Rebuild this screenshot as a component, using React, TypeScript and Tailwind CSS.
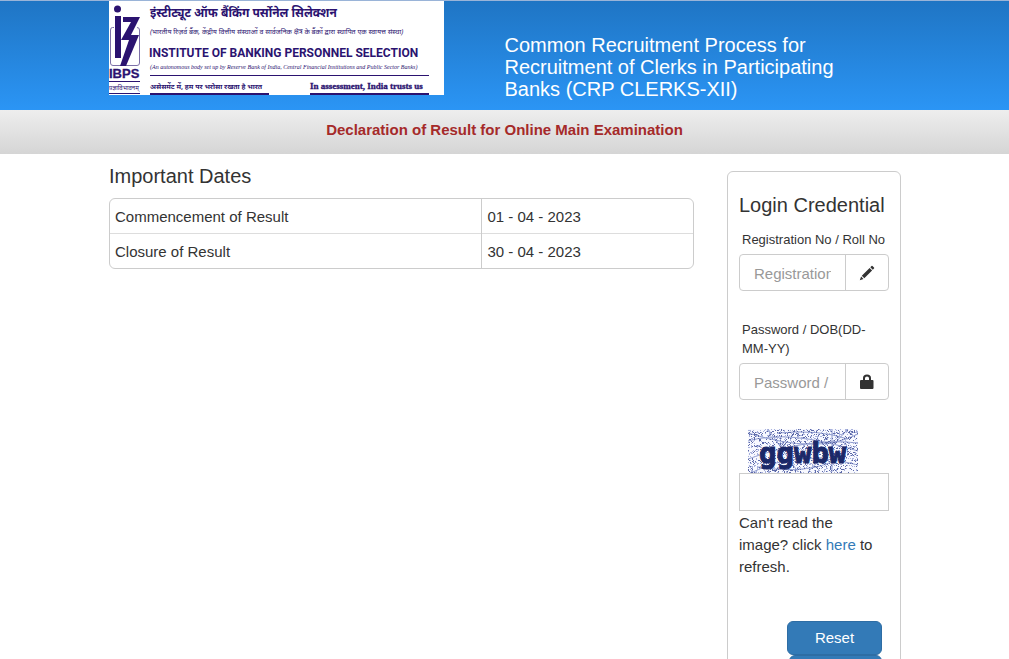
const DATES = [
  { label: "Commencement of Result", date: "01 - 04 - 2023" },
  { label: "Closure of Result", date: "30 - 04 - 2023" },
];

// small fixed-seed generator, so the captcha speckle is the same on each render
function speckle(start: number, count: number, width: number, height: number) {
  let seed = start;
  const next = () => {
    seed = (seed * 16807) % 2147483647;
    return seed / 2147483647;
  };
  let d = "";
  for (let i = 0; i < count; i++) {
    d += `M${Math.floor(next() * width)} ${Math.floor(next() * height)}h1v1h-1z`;
  }
  return d;
}

const SPECKLE_DARK = speckle(4711, 750, 110, 44);
const SPECKLE_LIGHT = speckle(90210, 1100, 110, 44);

function Logo() {
  return (
    <svg viewBox="0 0 335 94" className="block h-[94px] w-[335px] bg-white" role="img" aria-label="IBPS" fill="#2b1370">
      <path d="M5 26.500H3.500Q1.500 26.500 1.500 29V62Q1.500 64.500 4 64.500H28Q30.500 64.500 30.500 62V29Q30.500 26.500 28 26.500" fill="none" stroke="#7d70a8" />
      <ellipse cx="8.500" cy="8" rx="3.500" ry="3.500" />
      <path d="M6 15h6v42H6zM14 16h17l-9 18h8L17 65h-6l9-26h-8l10-18h-8z" />
      <text x="0" y="77" fontFamily="Liberation Sans, sans-serif" fontSize="13" fontWeight="700" stroke="#2b1370" strokeWidth="0.3">IBPS</text>
      <path d="M0 80h31v1H0zM0 92h31v1H0zM41 74h279v1H41zM41 92h119v2H41zM201 92h119v2H201z" />
      <text x="0" y="89" fontFamily="Noto Sans, sans-serif" fontSize="6">प्रज्ञाविभावनम्</text>
      <text x="41" y="16" fontFamily="Noto Sans, sans-serif" fontSize="12" fontWeight="700">इंस्टीट्यूट ऑफ बैंकिंग पर्सोनेल सिलेक्शन</text>
      <text x="41" y="33" fontFamily="Noto Sans, sans-serif" fontSize="7" fontStyle="italic">(भारतीय रिज़र्व बैंक, केंद्रीय वित्तीय संस्थाओं व सार्वजनिक क्षेत्र के बैंकों द्वारा स्थापित एक स्वायत्त संस्था)</text>
      <text x="40" y="56" fontFamily="Roboto, sans-serif" fontSize="12" fontWeight="700">INSTITUTE OF BANKING PERSONNEL SELECTION</text>
      <text x="41" y="68" fontFamily="Liberation Serif, serif" fontSize="6" fontStyle="italic">(An autonomous body set up by Reserve Bank of India, Central Financial Institutions and Public Sector Banks)</text>
      <text x="41" y="88" fontFamily="Noto Sans, sans-serif" fontSize="7" fontWeight="700">असेसमेंट में, हम पर भरोसा रखता है भारत</text>
      <text x="201" y="88" fontFamily="Liberation Serif, serif" fontSize="9" fontWeight="700" stroke="#2b1370" strokeWidth="0.3">In assessment, India trusts us</text>
    </svg>
  );
}

function PencilIcon() {
  return (
    <svg viewBox="0 0 16 16" className="size-4" fill="#333333" aria-hidden="true">
      <path d="M12.500 1q0.500-0.500 1 0L15 2.500q0.500 0.500 0 1L13.800 4.700l-2.500-2.500zM10.600 2.900l2.500 2.500-7.800 7.800-2.500-2.500zM2.100 11.500l2.400 2.400L0.800 15.200z" />
    </svg>
  );
}

function LockIcon() {
  return (
    <svg viewBox="0 0 16 16" className="size-4" fill="#333333" aria-hidden="true">
      <path fillRule="evenodd" d="M4 6V4Q4 0.500 8 0.500T12 4V6H13.500q1 0 1 1v7q0 1-1 1H2q-1 0-1-1V7q0-1 1-1zM6 6h4V4.200Q10 2.500 8 2.500T6 4.200z" />
    </svg>
  );
}

function Captcha() {
  return (
    <svg viewBox="0 0 110 44" className="ml-[9px] block h-11 w-[110px]" role="img" aria-label="Captcha">
      <rect width="110" height="44" fill="#f8f9ff" />
      <g fill="none" stroke="#8d9ace">
        <path d="M0 12Q40 0 110 22M0 30Q60 8 110 14M5 43Q50 20 110 36M0 4Q70 26 110 5M84 0v43M20 0L50 43M60 43L100 0M30 4Q70 0 100 10M10 38Q60 46 90 30" />
      </g>
      <path d={SPECKLE_LIGHT} fill="#a9b2dc" />
      <path d={SPECKLE_DARK} fill="#5c69a8" />
      <text x="11" y="34" fontFamily="DejaVu Sans Mono, monospace" fontSize="29" fontWeight="700" fill="#1b2868" stroke="#1b2868" strokeWidth="1">
        ggwbw
      </text>
    </svg>
  );
}

export default function App() {
  return (
    <div className="min-h-screen bg-white font-['Liberation_Sans',sans-serif] text-[15px] text-[#333333]">
      <header className="grid h-[110px] grid-cols-2 border-t border-[#9ab4d8] bg-linear-to-b from-[#1f75c4] to-[#2b95f5] px-[109px]">
        <div>
          <Logo />
        </div>
        <h1 className="pt-[33px] pr-12 text-[20px] leading-[22px] text-white">
          Common Recruitment Process for Recruitment of Clerks in Participating Banks (CRP CLERKS-XII)
        </h1>
      </header>
      <div className="h-11 bg-linear-to-b from-[#eeeeee] to-[#d5d5d5] pt-2 text-center leading-6 font-bold text-[#a52a2a]">
        Declaration of Result for Online Main Examination
      </div>

      <main className="flex items-start gap-[33px] pr-[108px] pl-[109px]">
        <section className="flex-1 pt-[11px]">
          <h2 className="text-[20px] leading-[22px]">Important Dates</h2>
          <div className="mt-[11px] overflow-hidden rounded-md border border-[#cccccc]">
            <table className="w-full leading-[22px]">
              <tbody>
                {DATES.map((row) => (
                  <tr key={row.label} className="border-b border-[#dddddd] last:border-b-0">
                    <td className="w-[371px] border-r border-[#cccccc] px-[5px] pt-[7px] pb-[5px]">{row.label}</td>
                    <td className="px-[6px] pt-[7px] pb-[5px]">{row.date}</td>
                  </tr>
                ))}
              </tbody>
            </table>
          </div>
        </section>

        <form className="mt-[17px] w-[174px] rounded-md border border-[#cccccc] px-[11px] pt-[22px] pb-5">
          <h2 className="text-[20px] leading-[22px] whitespace-nowrap">Login Credential</h2>
          <label htmlFor="regno" className="mt-[14px] block pl-[3px] text-[13px] leading-[19px] whitespace-nowrap">
            Registration No / Roll No
          </label>
          <div className="mt-[5px] flex h-[37px] rounded-sm border border-[#cccccc]">
            <input id="regno" type="text" placeholder="Registration No" className="w-0 flex-1 px-[14px] pt-[3px] placeholder:text-[#999999]" />
            <span className="flex w-[43px] items-center justify-center border-l border-[#cccccc]">
              <PencilIcon />
            </span>
          </div>

          <label htmlFor="password" className="mt-[29px] block pl-[3px] text-[13px] leading-[19px]">
            Password / DOB(DD-MM-YY)
          </label>
          <div className="mt-[5px] flex h-[37px] rounded-sm border border-[#cccccc]">
            <input id="password" type="password" placeholder="Password / DOB" className="w-0 flex-1 px-[14px] pt-[3px] placeholder:text-[#999999]" />
            <span className="flex w-[43px] items-center justify-center border-l border-[#cccccc]">
              <LockIcon />
            </span>
          </div>

          <div className="mt-[29px]">
            <Captcha />
            <input type="text" aria-label="Captcha text" className="block h-[38px] w-full border border-[#cccccc] px-3" />
          </div>
          <p className="mt-px pr-3 leading-[22px]">
            Can't read the image? click <a href="#" className="text-[#337ab7]">here</a> to refresh.
          </p>
          <div className="mt-[43px] mr-[7px] flex flex-col items-end">
            <button type="reset" className="h-[34px] w-[95px] rounded-md border border-[#2e6da4] bg-[#337ab7] text-white">Reset</button>
            <button type="submit" className="h-[34px] w-[93px] rounded-md border border-[#2e6da4] bg-[#337ab7] text-white">Login</button>
          </div>
        </form>
      </main>
    </div>
  );
}
